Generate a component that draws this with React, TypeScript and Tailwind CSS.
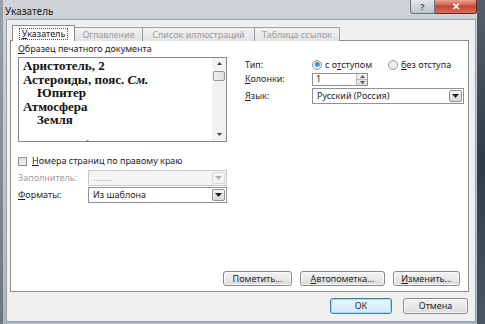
import React from "react";

const font = { fontFamily: '"Noto Sans", "Open Sans", sans-serif' };

const Tab = ({ label, active, w }: { label: string; active?: boolean; w: string }) =>
  active ? (
    <div className={`relative z-10 flex h-[16px] items-center justify-center border border-b-0 border-[#898c95] bg-white text-[9px] text-[#222] ${w}`}>
      <span className="border border-dotted border-[#555] px-[2px] leading-[10px]">
        <u>У</u>казатель
      </span>
    </div>
  ) : (
    <div className={`flex h-[14px] items-center justify-center border border-b-0 border-l-0 border-[#9aa0a8] bg-gradient-to-b from-[#f3f3f3] to-[#e3e3e3] text-[9px] text-[#9a9a9a] ${w}`}>
      {label}
    </div>
  );

const Arrow = ({ color = "#222" }: { color?: string }) => (
  <svg width="7" height="4" viewBox="0 0 7 4">
    <path d="M0 0h7L3.5 4z" fill={color} />
  </svg>
);

const Combo = ({
  value,
  disabled,
  className,
}: {
  value: string;
  disabled?: boolean;
  className: string;
}) => (
  <div
    className={`flex h-[16px] items-stretch border ${
      disabled ? "border-[#c9c9c9] bg-[#f4f4f4]" : "border-[#8e9299] bg-white"
    } ${className}`}
  >
    <div
      className={`flex flex-1 items-center pl-[4px] text-[9px] ${
        disabled ? "text-[#9a9a9a]" : "text-[#1e1e1e]"
      }`}
    >
      {value}
    </div>
    <div
      className={`my-[1px] mr-[1px] flex w-[13px] items-center justify-center rounded-[2px] border ${
        disabled
          ? "border-[#d8d8d8] bg-[#f4f4f4]"
          : "border-[#8f949b] bg-gradient-to-b from-[#f4f4f4] to-[#d9d9d9]"
      }`}
    >
      <Arrow color={disabled ? "#b0b0b0" : "#222"} />
    </div>
  </div>
);

const Button = ({
  children,
  className,
  primary,
}: {
  children: React.ReactNode;
  className: string;
  primary?: boolean;
}) => (
  <div
    className={`flex h-[15px] items-center justify-center rounded-[3px] border text-[9px] text-[#1e1e1e] ${
      primary
        ? "border-[#3c7fb1] bg-gradient-to-b from-[#eaf6fd] to-[#d2e9f7] shadow-[inset_0_0_0_1px_#a7d9f5]"
        : "border-[#8a8a8a] bg-gradient-to-b from-[#f4f4f4] to-[#dcdcdc] shadow-[inset_0_0_0_1px_#fafafa]"
    } ${className}`}
  >
    {children}
  </div>
);

const Radio = ({ checked }: { checked?: boolean }) => (
  <div className="flex h-[10px] w-[10px] items-center justify-center rounded-full border border-[#8e9299] bg-gradient-to-br from-[#e6e6e6] to-[#fafafa]">
    {checked && (
      <div className="h-[5px] w-[5px] rounded-full bg-gradient-to-br from-[#1d6fb8] to-[#6fb6ee]" />
    )}
  </div>
);

const preview = [
  { t: "Аристотель, 2", i: false },
  { t: "Астероиды, пояс.", i: false, see: "См." },
  { t: "Юпитер", i: true },
  { t: "Атмосфера", i: false },
  { t: "Земля", i: true },
];

export default function App() {
  return (
    <div
      className="relative flex h-[324px] w-[485px] flex-col overflow-hidden bg-gradient-to-b from-[#cfd4d9] via-[#c1c7cd] to-[#aeb5bc]"
      style={font}
    >
      {/* title bar */}
      <div className="flex h-[19px] items-center pl-[5px] pt-[4px] text-[10px] text-[#1a1a1a]">
        Указатель
      </div>
      <div className="absolute right-[8px] top-0 flex h-[14px]">
        <div className="flex w-[25px] items-center justify-center rounded-bl-[3px] border border-t-0 border-[#6d7680] bg-gradient-to-b from-[#e4e8ec] to-[#bcc3ca] text-[9px] font-bold text-[#4a5560]">
          ?
        </div>
        <div className="flex w-[42px] items-center justify-center rounded-br-[3px] border border-l-0 border-t-0 border-[#6b2a20] bg-gradient-to-b from-[#e8a497] via-[#c9452f] to-[#d4705c] text-[10px] font-bold text-white">
          ✕
        </div>
      </div>
      <div className="absolute right-0 top-0 h-full w-[8px] bg-gradient-to-b from-[#56606a] via-[#2e3a48] to-[#4a5866]" />
      <div className="absolute left-0 top-0 h-full w-[3px] bg-gradient-to-b from-[#9aa1a8] to-[#6e7780]" />

      {/* client */}
      <div className="mb-[2px] ml-[6px] mr-[9px] flex flex-1 flex-col border border-[#9aa2ab] bg-[#f0f0f0]">
        <div className="ml-[3px] mt-[5px] w-[459px]">
          {/* tabs */}
          <div className="-mb-[1px] ml-[2px] flex items-end">
            <Tab label="Указатель" active w="w-[63px]" />
            <Tab label="Оглавление" w="w-[68px]" />
            <Tab label="Список иллюстраций" w="w-[112px]" />
            <Tab label="Таблица ссылок" w="w-[85px]" />
          </div>

          {/* panel */}
          <div className="flex h-[252px] flex-col border border-[#898c95] bg-white">
            <div className="flex">
              {/* left column */}
              <div className="ml-[7px] flex w-[209px] flex-col pt-[2px]">
                <div className="h-[12px] text-[9px] leading-[12px] text-[#1e1e1e]">
                  <u>О</u>бразец печатного документа
                </div>
                <div className="mt-[2px] flex h-[85px] border border-[#828790]">
                  <div
                    className="flex-1 overflow-hidden pl-[4px] pt-[1px] text-[13px] font-bold leading-[13.5px] text-[#111]"
                    style={{ fontFamily: '"Liberation Serif", "DejaVu Serif", serif' }}
                  >
                    {preview.map((p) => (
                      <div key={p.t} className={p.i ? "pl-[14px]" : ""}>
                        {p.t}
                        {p.see && <i> {p.see}</i>}
                      </div>
                    ))}
                    <div className="mt-[11px] pl-[30px]">экзосфера, 4</div>
                  </div>
                  <div className="flex w-[14px] flex-col items-center bg-[#f2f2f2] pt-[4px]">
                    <svg width="5" height="3" viewBox="0 0 5 3">
                      <path d="M0 3h5L2.5 0z" fill="#444" />
                    </svg>
                    <div className="mt-[6px] h-[10px] w-[12px] rounded-[2px] border border-[#979797] bg-gradient-to-r from-[#f2f2f2] to-[#dedede]" />
                    <div className="flex-1" />
                    <svg className="mb-[5px]" width="5" height="3" viewBox="0 0 5 3">
                      <path d="M0 0h5L2.5 3z" fill="#444" />
                    </svg>
                  </div>
                </div>

                <div className="mt-[13px] flex h-[12px] items-center text-[9px] text-[#1e1e1e]">
                  <div className="h-[9px] w-[9px] border border-[#8e9299] bg-gradient-to-br from-[#dcdcdc] to-[#f6f6f6]" />
                  <span className="ml-[5px]">
                    <u>Н</u>омера страниц по правому краю
                  </span>
                </div>

                <div className="mt-[3px] flex items-center">
                  <div className="w-[70px] text-[9px] text-[#a0a0a0]">Заполнитель:</div>
                  <Combo value="........" disabled className="w-[139px]" />
                </div>
                <div className="mt-[1px] flex items-center">
                  <div className="w-[70px] text-[9px] text-[#1e1e1e]">
                    <u>Ф</u>орматы:
                  </div>
                  <Combo value="Из шаблона" className="w-[139px]" />
                </div>
              </div>

              {/* right column */}
              <div className="ml-[18px] flex flex-col pt-[16px] text-[9px] text-[#1e1e1e]">
                <div className="flex h-[15px] items-center">
                  <div className="w-[67px]">Тип:</div>
                  <Radio checked />
                  <span className="ml-[3px]">
                    с о<u>т</u>ступом
                  </span>
                  <div className="ml-[16px]">
                    <Radio />
                  </div>
                  <span className="ml-[3px]">
                    <u>б</u>ез отступа
                  </span>
                </div>
                <div className="flex h-[14px] items-center">
                  <div className="w-[67px]">
                    <u>К</u>олонки:
                  </div>
                  <div className="flex h-[13px] w-[56px] border border-[#8e9299]">
                    <div className="flex flex-1 items-center pl-[3px]">1</div>
                    <div className="flex w-[11px] flex-col border-l border-[#b5b9be] bg-gradient-to-b from-[#f2f2f2] to-[#dcdcdc]">
                      <div className="flex flex-1 items-center justify-center border-b border-[#b5b9be]">
                        <svg width="5" height="3" viewBox="0 0 5 3">
                          <path d="M0 3h5L2.5 0z" fill="#555" />
                        </svg>
                      </div>
                      <div className="flex flex-1 items-center justify-center">
                        <svg width="5" height="3" viewBox="0 0 5 3">
                          <path d="M0 0h5L2.5 3z" fill="#555" />
                        </svg>
                      </div>
                    </div>
                  </div>
                </div>
                <div className="mt-[2px] flex items-center">
                  <div className="w-[67px]">
                    <u>Я</u>зык:
                  </div>
                  <Combo value="Русский (Россия)" className="w-[152px]" />
                </div>
              </div>
            </div>

            <div className="flex-1" />
            <div className="mb-[5px] mr-[8px] flex justify-end gap-[8px]">
              <Button className="w-[69px]">
                Пометить...
              </Button>
              <Button className="w-[85px]">
                <u>А</u>втопометка...
              </Button>
              <Button className="w-[67px]">
                <u>И</u>зменить...
              </Button>
            </div>
          </div>
        </div>

        <div className="mr-[7px] mt-[6px] flex justify-end gap-[11px]">
          <Button primary className="h-[16px] w-[62px]">
            ОК
          </Button>
          <Button className="h-[16px] w-[65px]">Отмена</Button>
        </div>
      </div>
    </div>
  );
}
